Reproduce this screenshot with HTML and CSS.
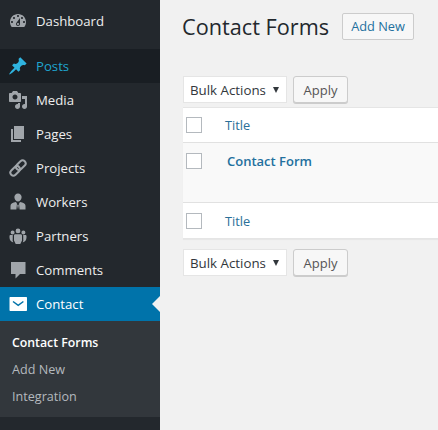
FILE: index.html
```html
<!DOCTYPE html>
<html lang="en">
<head>
  <meta charset="UTF-8">
  <title>Contact Forms</title>
  <link rel="stylesheet" href="styles.css">
</head>
<body>
<div class="layout">
  <div class="sidebar">
    <ul class="menu">
      <li class="menu-item dashboard">
        <svg class="icon" viewBox="0 0 20 20"><path d="M3.760 16h12.480c1.100-1.370 1.760-3.110 1.760-5 0-4.420-3.580-8-8-8s-8 3.580-8 8c0 1.890.66 3.630 1.760 5zM10 4c.55 0 1 .45 1 1s-.45 1-1 1-1-.45-1-1 .45-1 1-1zM6 6c.55 0 1 .45 1 1s-.45 1-1 1-1-.45-1-1 .45-1 1-1zm8 0c.55 0 1 .45 1 1s-.45 1-1 1-1-.45-1-1 .45-1 1-1zm-5.370 5.550L12 7v6c0 1.100-.9 2-2 2s-2-.9-2-2c0-.57.24-1.080.63-1.450zM4 10c.55 0 1 .45 1 1s-.45 1-1 1-1-.45-1-1 .45-1 1-1zm12 0c.55 0 1 .45 1 1s-.45 1-1 1-1-.45-1-1 .45-1 1-1zm-5 3c0-.55-.45-1-1-1s-1 .45-1 1 .45 1 1 1 1-.45 1-1z"/></svg>
        <span>Dashboard</span>
      </li>
      <li class="menu-item posts">
        <svg class="icon" viewBox="0 0 20 20"><path d="M10.440 3.020l1.820-1.820 6.360 6.350-1.830 1.820c-1.050-.68-2.480-.57-3.410.36l-.75.75c-.92.93-1.040 2.350-.35 3.410l-1.830 1.820-2.410-2.410-2.800 2.790c-.42.42-3.380 2.710-3.800 2.290s1.860-3.390 2.280-3.810l2.790-2.790L4.100 9.360l1.830-1.820c1.050.69 2.480.57 3.400-.36l.75-.75c.93-.92 1.050-2.350.36-3.410z"/></svg>
        <span>Posts</span>
      </li>
      <li class="menu-item">
        <svg class="icon" viewBox="0 0 20 20"><path d="M13 11V4c0-.55-.45-1-1-1h-1.670L9 1H5L3.670 3H2c-.55 0-1 .45-1 1v7c0 .55.45 1 1 1h10c.55 0 1-.45 1-1zM7 4.500c1.380 0 2.500 1.120 2.500 2.500S8.380 9.500 7 9.500 4.500 8.380 4.500 7 5.620 4.500 7 4.500zM14 6h5v10.500c0 1.380-1.120 2.500-2.500 2.500S14 17.880 14 16.500s1.120-2.500 2.500-2.500c.17 0 .34.020.5.050V9h-3V6zm-4 8.050V13h2v3.500c0 1.380-1.120 2.500-2.500 2.500S7 17.880 7 16.500 8.120 14 9.500 14c.17 0 .34.020.5.050z"/></svg>
        <span>Media</span>
      </li>
      <li class="menu-item">
        <svg class="icon" viewBox="0 0 20 20"><path d="M6 15V2h10v13H6zm-1 1h8v2H3V5h2v11z"/></svg>
        <span>Pages</span>
      </li>
      <li class="menu-item">
        <svg class="icon" viewBox="0 0 20 20"><g fill="none" stroke="currentColor" stroke-width="2" transform="rotate(-45 10 10)"><rect x="0.500" y="7" width="11" height="6" rx="3"/><rect x="8.500" y="7" width="11" height="6" rx="3"/></g></svg>
        <span>Projects</span>
      </li>
      <li class="menu-item">
        <svg class="icon" viewBox="0 0 20 20"><path d="M10 1.500a3.600 3.600 0 0 1 3.600 4c-.2 2.200-1.700 4-3.600 4S6.600 7.700 6.400 5.500A3.600 3.600 0 0 1 10 1.500zM2.500 17.500v-3.700c0-2.200 2.400-3.400 5.500-3.800l1 1.800-.6 5.700zM17.500 17.500v-3.700c0-2.200-2.400-3.400-5.500-3.800l-1 1.800.6 5.700zM10 12.300l-.8 1.200.8 4 .8-4z"/></svg>
        <span>Workers</span>
      </li>
      <li class="menu-item">
        <svg class="icon" viewBox="0 0 20 20"><path d="M10 2.500a2.400 2.400 0 1 1 0 4.800 2.400 2.400 0 0 1 0-4.800zM4.600 4.500a2 2 0 1 1 0 4 2 2 0 0 1 0-4zM15.400 4.500a2 2 0 1 1 0 4 2 2 0 0 1 0-4zM7.300 8.300h5.400c.8 0 1.300.6 1.300 1.400v4.800L12.300 18H7.700L6 14.500V9.700c0-.8.500-1.400 1.300-1.400zM1.500 10c0-.5.500-1 1-1h2.300l-.1 6 .7 1.500C3 16 1.500 14 1.500 11.500zM18.500 10c0-.5-.5-1-1-1h-2.300l.1 6-.7 1.500c2.400-.5 3.900-2.500 3.900-5z"/></svg>
        <span>Partners</span>
      </li>
      <li class="menu-item">
        <svg class="icon" viewBox="0 0 20 20"><path d="M3 2h14.500v12H12l-4.500 4.500V14H3z"/></svg>
        <span>Comments</span>
      </li>
      <li class="menu-item current">
        <svg class="icon" viewBox="0 0 20 20"><path d="M2.500 3h15.500c.6 0 1 .4 1 1v12c0 .6-.4 1-1 1H2.500c-.6 0-1-.4-1-1V4c0-.6.4-1 1-1z"/><path class="fold" d="M5 7.500l5.200 3.800 5.200-3.800"/></svg>
        <span>Contact</span>
      </li>
    </ul>
    <ul class="submenu">
      <li class="active">Contact Forms</li>
      <li>Add New</li>
      <li>Integration</li>
    </ul>
  </div>

  <div class="content">
    <div class="page-head">
      <h1>Contact Forms</h1>
      <a class="add-new">Add New</a>
    </div>

    <div class="bulk top">
      <div class="select">Bulk Actions <i class="arrow"></i></div>
      <button class="apply">Apply</button>
    </div>

    <div class="table">
      <div class="row head">
        <span class="check"></span>
        <a class="title">Title</a>
      </div>
      <div class="row item">
        <span class="check"></span>
        <a class="form-name">Contact Form</a>
      </div>
      <div class="row foot">
        <span class="check"></span>
        <a class="title">Title</a>
      </div>
    </div>

    <div class="bulk bottom">
      <div class="select">Bulk Actions <i class="arrow"></i></div>
      <button class="apply">Apply</button>
    </div>
  </div>
</div>
</body>
</html>
```

FILE: styles.css
```css
* {
  box-sizing: border-box;
}

html, body {
  margin: 0;
  padding: 0;
  height: 430px;
  overflow: hidden;
}

body {
  font-family: 'Open Sans', 'Noto Sans', sans-serif;
  font-size: 13px;
  background-color: #f1f1f1;
  color: #444;
}

.layout {
  display: flex;
  height: 430px;
}

/* sidebar */
.sidebar {
  width: 160px;
  flex: none;
  background-color: #23282d;
  padding-top: 4px;
}

.menu, .submenu {
  list-style: none;
  margin: 0;
  padding: 0;
}

.menu-item {
  position: relative;
  display: flex;
  align-items: center;
  height: 34px;
  color: #eee;
  font-size: 13.200px;
}

.menu-item .icon {
  width: 20px;
  height: 20px;
  margin-left: 8px;
  margin-right: 8px;
  fill: #a0a5aa;
  color: #a0a5aa;
  flex: none;
}

.dashboard {
  margin-bottom: 11px;
}

.posts {
  background-color: #191e23;
  color: #1fa5d0;
}

.posts .icon {
  fill: #2fb4e0;
}

.current {
  background-color: #0073aa;
  color: #fff;
}

.current .icon {
  fill: #fff;
}

.current .icon .fold {
  fill: none;
  stroke: #0073aa;
  stroke-width: 1.500;
}

.current::after {
  content: "";
  position: absolute;
  right: 0;
  top: 9px;
  border: 8px solid transparent;
  border-right-color: #f1f1f1;
  border-left-width: 0;
}

.submenu {
  background-color: #32373c;
  padding: 8px 0 7px;
  color: #b4b9be;
  font-size: 12.600px;
}

.submenu li {
  height: 27px;
  line-height: 27px;
  padding-left: 12px;
}

.submenu .active {
  color: #fff;
  font-weight: 600;
  font-size: 12.300px;
}

/* main area */
.content {
  flex: 1;
  min-width: 0;
  padding-top: 13px;
  padding-left: 23px;
}

.page-head {
  display: flex;
  align-items: center;
  height: 27px;
}

h1 {
  margin: 0 0 0 -1px;
  font-size: 21.700px;
  font-weight: 400;
  color: #23282d;
}

.add-new {
  margin-left: 13px;
  width: 72px;
  height: 27px;
  line-height: 25px;
  text-align: center;
  border: 1px solid #ccc;
  border-radius: 2px;
  background-color: #f7f7f7;
  color: #23709e;
  font-weight: 500;
  font-size: 12.800px;
}

.bulk {
  display: flex;
  gap: 6px;
  height: 27px;
}

.top {
  margin-top: 36px;
}

.bottom {
  margin-top: 10px;
}

.select {
  display: flex;
  align-items: center;
  justify-content: space-between;
  width: 104px;
  padding: 0 7px 0 6px;
  background-color: #fff;
  border: 1px solid #e5e5e5;
  font-size: 13.300px;
  color: #32373c;
}

.arrow {
  width: 0;
  height: 0;
  border-left: 3.500px solid transparent;
  border-right: 3.500px solid transparent;
  border-top: 6px solid #32373c;
}

.apply {
  width: 55px;
  height: 27px;
  padding: 0;
  font-family: inherit;
  font-size: 13px;
  color: #555;
  background-color: #f7f7f7;
  border: 1px solid #ccc;
  border-radius: 3px;
  box-shadow: 0 1px 0 #ccc;
}

.table {
  margin-top: 4px;
  background-color: #fff;
  border-top: 1px solid #e5e5e5;
  border-bottom: 1px solid #e5e5e5;
  box-shadow: 0 1px 1px rgba(0, 0, 0, 0.04);
}

.row {
  display: flex;
  padding-left: 3px;
}

.head {
  height: 35px;
  align-items: center;
  border-bottom: 1px solid #e1e1e1;
}

.item {
  height: 60px;
  background-color: #f9f9f9;
  padding-top: 10px;
  border-bottom: 1px solid #e1e1e1;
}

.item .form-name {
  margin-top: -1px;
}

.foot {
  height: 35px;
  align-items: center;
}

.check {
  width: 16px;
  height: 16px;
  flex: none;
  background-color: #fff;
  border: 1px solid #b4b9be;
}

.title {
  margin-left: 23px;
  color: #2a7099;
  font-size: 12.800px;
}

.form-name {
  margin-left: 25px;
  color: #23709e;
  font-weight: 600;
  font-size: 13px;
}
```
